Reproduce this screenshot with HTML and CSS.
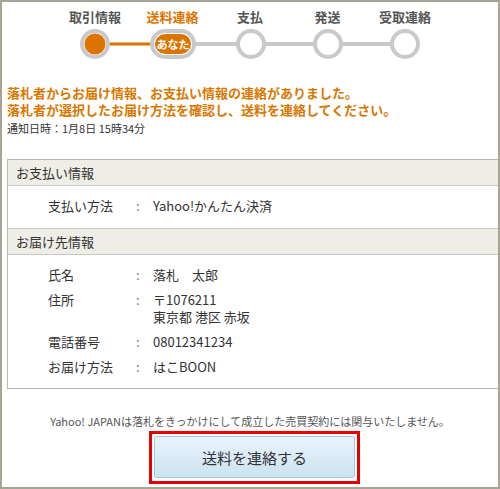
FILE: index.html
```html
<!DOCTYPE html>
<html lang="ja">
<head>
<meta charset="utf-8">
<title>取引ナビ</title>
<link rel="stylesheet" href="styles.css">
</head>
<body>
<div class="frame">
  <div class="steps">
    <span class="step">取引情報</span>
    <span class="step current">送料連絡</span>
    <span class="step">支払</span>
    <span class="step">発送</span>
    <span class="step">受取連絡</span>
  </div>
  <svg class="track" width="496" height="34" viewBox="0 0 496 34">
    <line x1="171" y1="17" x2="403" y2="17" stroke="#c9c9c9" stroke-width="4"/>
    <line x1="93" y1="17" x2="171" y2="17" stroke="#dc7400" stroke-width="3"/>
    <circle cx="93" cy="17" r="13" fill="#fff" stroke="#c9c9c9" stroke-width="4"/>
    <circle cx="93" cy="17" r="10.5" fill="#dc7400"/>
    <rect x="150" y="4" width="42" height="26" rx="13" fill="#fff" stroke="#c9c9c9" stroke-width="4"/>
    <rect x="153" y="7" width="36" height="20" rx="10" fill="#dc7400"/>
    <text x="171" y="21.5" text-anchor="middle" class="you">あなた</text>
    <circle cx="249" cy="17" r="13" fill="#fff" stroke="#c9c9c9" stroke-width="4"/>
    <circle cx="326" cy="17" r="13" fill="#fff" stroke="#c9c9c9" stroke-width="4"/>
    <circle cx="403" cy="17" r="13" fill="#fff" stroke="#c9c9c9" stroke-width="4"/>
  </svg>

  <p class="message">落札者からお届け情報、お支払い情報の連絡がありました。<br>落札者が選択したお届け方法を確認し、送料を連絡してください。</p>
  <p class="notice">通知日時：1月8日 15時34分</p>

  <div class="box">
    <div class="box-head">お支払い情報</div>
    <div class="box-body first">
      <div class="row"><span class="label">支払い方法</span><span class="colon">:</span><span class="value">Yahoo!かんたん決済</span></div>
    </div>
    <div class="box-head">お届け先情報</div>
    <div class="box-body">
      <div class="row"><span class="label">氏名</span><span class="colon">:</span><span class="value">落札　太郎</span></div>
      <div class="row"><span class="label">住所</span><span class="colon">:</span><span class="value">〒1076211<br>東京都 港区 赤坂</span></div>
      <div class="row"><span class="label">電話番号</span><span class="colon">:</span><span class="value">08012341234</span></div>
      <div class="row"><span class="label">お届け方法</span><span class="colon">:</span><span class="value">はこBOON</span></div>
    </div>
  </div>

  <p class="disclaimer">Yahoo! JAPANは落札をきっかけにして成立した売買契約には関与いたしません。</p>
  <div class="actions">
    <div class="highlight">
      <button class="submit" type="button">送料を連絡する</button>
    </div>
  </div>
</div>
</body>
</html>
```

FILE: styles.css
```css
html, body {
  margin: 0;
  padding: 0;
  background: #fff;
}

body {
  font-family: "Noto Sans CJK JP", "Noto Sans", sans-serif;
  color: #333;
}

.frame {
  box-sizing: border-box;
  width: 500px;
  height: 489px;
  border: 2px solid #a6a595;
  padding-top: 7px;
  overflow: hidden;
}

.steps {
  display: grid;
  grid-template-columns: repeat(5, 77.5px);
  justify-content: center;
}

.step {
  text-align: center;
  font-size: 13px;
  font-weight: bold;
  line-height: 16px;
  color: #555;
  white-space: nowrap;
}

.step.current {
  color: #dc7400;
}

.track {
  display: block;
  margin-top: 2px;
}

.you {
  fill: #fff;
  font-size: 11px;
  font-weight: bold;
  font-family: "Noto Sans CJK JP", sans-serif;
}

.message {
  margin: 23px 0 0 5px;
  font-size: 13px;
  line-height: 17px;
  font-weight: bold;
  color: #d97700;
  white-space: nowrap;
}

.notice {
  margin: 2px 0 0 5px;
  font-size: 11px;
  line-height: 16px;
  color: #333;
}

.box {
  margin: 23px 0 0 5px;
  border: 1px solid #b8b8b4;
  border-right: none;
}

.box-head {
  height: 25px;
  line-height: 25px;
  padding-left: 8px;
  background: #eeede6;
  border-bottom: 1px solid #c8c8c4;
  font-size: 13px;
  color: #333;
}

.box-body {
  padding: 11px 0 13px 40px;
  display: flex;
  flex-direction: column;
  gap: 8px;
}

.box-body.first {
  padding-bottom: 14px;
  border-bottom: 1px solid #c8c8c4;
}

.row {
  display: grid;
  grid-template-columns: 88px 17px auto;
  font-size: 13px;
  line-height: 17px;
}

.colon {
  color: #777;
}

.disclaimer {
  margin: 24px 0 0;
  text-align: center;
  font-size: 11px;
  line-height: 16px;
  color: #555;
}

.actions {
  display: flex;
  justify-content: center;
  padding-left: 9px;
  margin-top: 2px;
}

.highlight {
  border: 3px solid #e60000;
  padding: 2px 2px 3px;
}

.submit {
  display: block;
  box-sizing: border-box;
  width: 201px;
  height: 42px;
  border: 1px solid #a3c9e2;
  border-radius: 2px;
  background: linear-gradient(#e9f4fb, #cbe3f2);
  font-family: "Noto Sans CJK JP", sans-serif;
  font-size: 15px;
  color: #333;
  padding: 0;
  cursor: pointer;
}
```
